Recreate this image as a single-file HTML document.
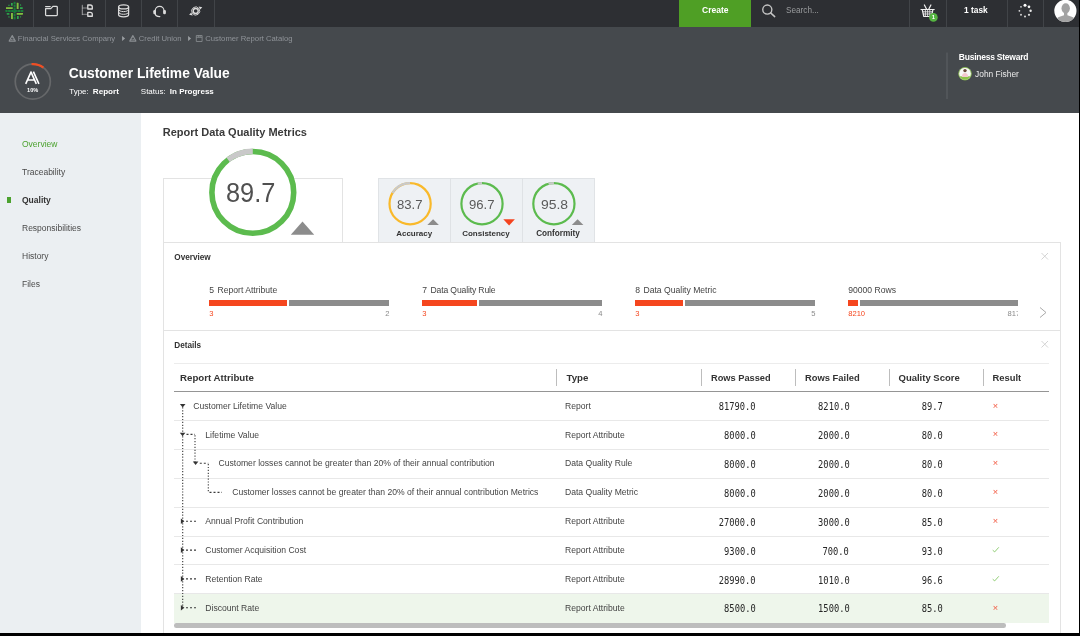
<!DOCTYPE html>
<html lang="en">
<head>
<meta charset="utf-8">
<title>Customer Lifetime Value</title>
<style>
*{box-sizing:border-box;margin:0;padding:0}
html,body{width:1080px;height:636px;overflow:hidden;background:#fff}
body{position:relative;font-family:"Liberation Sans",sans-serif;color:#444;font-size:8.5px}
.abs,.t{position:absolute}
.t{white-space:nowrap;line-height:1}
.b{font-weight:700}
#topbar{left:0;top:0;width:1080px;height:27px;background:#2d2f33}
.sep{position:absolute;top:0;width:1.200px;height:27px;background:#414448}
#header{left:0;top:27px;width:1080px;height:86px;background:#45494d}
#sidebar{left:0;top:113px;width:141px;height:523px;background:#ebeff2}
.nav{left:22px;font-size:8.5px;color:#4a4a4a}
.mono{font-family:"DejaVu Sans Mono","Liberation Mono",monospace;font-size:9.9px;color:#262626;transform-origin:100% 50%;transform:scaleX(.885)}
.panel{position:absolute;border:1px solid #e3e3e3;background:#fff}
.bar{position:absolute;height:5.500px;top:300.300px}
.red{background:#f04e23}
.gry{background:#8c8c8c}
.row{position:absolute;left:174px;width:875px;height:1px;background:#e8e8e8}
.hsep{position:absolute;top:369px;width:1px;height:17px;background:#bdbdbd}
.rt{font-size:8.6px;color:#444}
.num{text-align:right}
</style>
</head>
<body>
<div id="wrap" style="position:absolute;left:0;top:0;width:1080px;height:636px;will-change:transform">
<!-- TOP BAR -->
<div id="topbar" class="abs">
<div class="sep" style="left:32.7px"></div><div class="sep" style="left:69px"></div><div class="sep" style="left:105px"></div><div class="sep" style="left:141.3px"></div><div class="sep" style="left:177.3px"></div><div class="sep" style="left:213.5px"></div>
<div class="sep" style="left:909px"></div><div class="sep" style="left:945.5px"></div><div class="sep" style="left:1006.5px"></div><div class="sep" style="left:1043px"></div>
<div class="abs" style="left:679px;top:0;width:72px;height:27px;background:#4f9f25"></div>
<span class="t b" style="left:702px;top:6px;font-size:8.5px;color:#fff">Create</span>
<span class="t" style="left:786px;top:6.5px;font-size:8.2px;color:#9a9c9e">Search...</span>
<span class="t b" style="left:964px;top:6px;font-size:8.4px;color:#fff">1 task</span>
<span class="t b" style="left:931.700px;top:14.400px;font-size:6px;color:#fff;z-index:2">1</span>
<svg class="abs" style="left:0;top:0" width="1080" height="27" viewBox="0 0 1080 27">
<!-- logo -->
<g id="logo">
<clipPath id="lc"><circle cx="14.5" cy="10.8" r="9.2"/></clipPath>
<g clip-path="url(#lc)">
<path d="M5 10.900H24" stroke="#1a7d3a" stroke-width="2" stroke-dasharray="2.600 .5" fill="none"/>
<path d="M14.600 1.500V20.500" stroke="#1a7d3a" stroke-width="2" stroke-dasharray="2.600 .5" fill="none"/>
<rect x="6" y="7.200" width="6.700" height="1.800" fill="#82bf3f"/>
<rect x="16.700" y="13" width="6.300" height="1.800" fill="#82bf3f"/>
<rect x="16.700" y="2.700" width="1.900" height="6.300" fill="#82bf3f"/>
<rect x="11" y="13" width="1.900" height="6.300" fill="#82bf3f"/>
<rect x="11" y="3" width="1.700" height="2.700" fill="#2fa84f"/>
<rect x="17" y="16" width="1.700" height="3" fill="#2fa84f"/>
<rect x="6.700" y="13.100" width="2.700" height="1.600" fill="#2fa84f"/>
<rect x="20" y="7.200" width="2.700" height="1.800" fill="#2fa84f"/>
<rect x="8.300" y="4.700" width="1.300" height="1.300" fill="#2a9a48"/>
<rect x="20" y="4.300" width="1.200" height="1.400" fill="#2a9a48"/>
<rect x="8.300" y="16.300" width="1.300" height="1.300" fill="#2a9a48"/>
<rect x="20" y="16.300" width="1.200" height="1.300" fill="#2a9a48"/>
</g></g>
<g fill="none" stroke="#dcdcdc" stroke-width="1.25" stroke-linejoin="round" stroke-linecap="round">
<!-- folder -->
<path d="M45.6 6.5h4.6"/>
<path d="M45.6 8.7h5.2l2.1-2.3h3.6a.8.8 0 0 1 .8.8v7.6a.8.8 0 0 1-.8.8h-10.1a.8.8 0 0 1-.8-.8z"/>
<!-- hierarchy -->
<path d="M82.3 5.2v9.500" stroke-width="0.9" stroke-dasharray="0.8 0.5" opacity=".65"/>
<path d="M82.8 8h4.300M82.8 14.3h4.300" stroke-width="0.9" opacity=".6"/>
<path d="M87.800 5h2.4a2.100 2.100 0 0 1 2.100 2.100v1.900h-4.500zM87.800 12.3h2.4a2.100 2.100 0 0 1 2.100 2.100v1.900h-4.500z" stroke-width="1.350"/>
<!-- database -->
<ellipse cx="123.6" cy="6.9" rx="5" ry="2"/>
<path d="M118.6 6.9v7.9c0 1.1 2.2 2 5 2s5-.9 5-2v-7.9"/>
<path d="M118.6 9.6c0 1.1 2.2 2 5 2s5-.9 5-2M118.6 12.3c0 1.1 2.2 2 5 2s5-.9 5-2" stroke-width="1"/>
<!-- headset -->
<path d="M155.2 13.2v-2.3a4.4 4.4 0 0 1 8.8 0v2.3"/>
<path d="M155.2 13.5c0 2 1.6 3 4.6 3" />
<!-- transfer -->
<circle cx="195.7" cy="11" r="2.500" stroke-width="1.350"/>
<path d="M192.15 13.05A4.1 4.1 0 0 1 198.84 8.36M199.25 8.95A4.1 4.1 0 0 1 192.56 13.64" stroke-width=".9"/>
<!-- search -->
<circle cx="767.300" cy="9.600" r="4.550" stroke="#c4c4c4" stroke-width="1.400"/>
<path d="M770.600 12.900l4.100 3.700" stroke="#c4c4c4" stroke-width="1.500"/>
<!-- basket -->
<path d="M921 9.500h13.200M922.300 9.700l1.500 6.800h7.600l1.500-6.800M926.600 9.300l-2.200-4.300M928.700 9.300l2.200-4.300" stroke-width="1.200" stroke="#f0f0f0"/>
<path d="M925.400 10v6M927.600 10v6M929.800 10v6M922.800 11.800h9.600M923.300 14h8.600" stroke-width="0.800" stroke="#f0f0f0"/>
</g>
<g fill="#dcdcdc">
<rect x="153.300" y="10" width="2.600" height="4.200" rx="1.200"/>
<rect x="163.300" y="10" width="2.600" height="4.200" rx="1.200"/>
<path d="M202.300 7.300l-3.700-.9 1.600 3.200zM189.100 14.700l3.700.9-1.600-3.200z"/>
<!-- dotted spinner -->
<circle cx="1025" cy="5.200" r="1.500" fill="#fff"/>
<circle cx="1029" cy="6.800" r="1.350" fill="#f4f4f4"/>
<circle cx="1030.600" cy="10.800" r="1.200" fill="#eaeaea"/>
<circle cx="1029" cy="14.800" r="1.100"/>
<circle cx="1025" cy="16.400" r="1"/>
<circle cx="1021" cy="14.800" r=".95"/>
<circle cx="1019.400" cy="10.800" r=".9"/>
<circle cx="1021" cy="6.800" r=".85"/>
</g>
<circle cx="933.400" cy="17.400" r="4.300" fill="#55b441"/>

<!-- avatar -->
<clipPath id="ac"><circle cx="1065.400" cy="10.850" r="11.100"/></clipPath>
<circle cx="1065.400" cy="10.850" r="11.100" fill="#fdfdfd"/>
<g clip-path="url(#ac)" fill="#a2a2a2">
<ellipse cx="1065.700" cy="8.300" rx="4.200" ry="5.100"/>
<path d="M1064 12h3.400v3.200l5 1.800c1.500.6 2.500 2 2.500 4v3h-18.500v-3c0-2 1-3.400 2.500-4l5.100-1.800z"/>
</g>
</svg>
</div>
<div id="header" class="abs"></div>
<!-- breadcrumbs -->
<span class="t" style="left:17.8px;top:35.1px;font-size:7.7px;color:#8f9398">Financial Services Company</span>
<span class="t" style="left:138.8px;top:35.1px;font-size:7.7px;color:#8f9398">Credit Union</span>
<span class="t" style="left:205.3px;top:35.1px;font-size:7.7px;color:#8f9398">Customer Report Catalog</span>
<svg class="abs" style="left:0;top:27px" width="1080" height="86" viewBox="0 27 1080 86">
<g fill="none" stroke="#8b8f93" stroke-width="0.8" stroke-linejoin="round">
<path d="M12.25 35.600l3.100 5.500h-6.200z" stroke-width="1.100"/><path d="M12.25 37.200v.7M10.95 39.600h.7M12.85 39.600h.7" stroke-width=".9" stroke-linecap="round"/>
<path d="M132.85 35.600l3.100 5.500h-6.200z" stroke-width="1.100"/><path d="M132.85 37.200v.7M131.55 39.600h.7M133.45 39.600h.7" stroke-width=".9" stroke-linecap="round"/>
<path d="M196.300 35.500h5.800v6h-5.800zM196.300 37.300h5.800M198.300 35.500v1.800M200.100 35.500v1.800"/>
</g>
<path d="M122.100 35.900l3 2.500-3 2.500zM188.100 35.900l3 2.500-3 2.500z" fill="#9a9ea2"/>
<!-- progress ring -->
<circle cx="32.800" cy="81.600" r="17.550" fill="none" stroke="#66686a" stroke-width="1.700"/>
<path d="M31.58 64.09A17.55 17.55 0 0 1 43.36 67.58" fill="none" stroke="#f04e23" stroke-width="2.300"/>
<g fill="none" stroke="#fff" stroke-width="1.600">
<path d="M25.700 83.900l5.500-12.300M30.800 71.600l5.500 12.300M33.400 71.600l5.500 12.300M27.600 80h7"/>
</g>
<rect x="946.500" y="52.500" width="1" height="46.500" fill="#5e6266"/>
<!-- small avatar -->
<clipPath id="sc"><circle cx="965" cy="73.700" r="6"/></clipPath>
<circle cx="965" cy="73.700" r="6.300" fill="#f6f6f6" stroke="#8bc34a" stroke-width="0.800"/>
<g clip-path="url(#sc)">
<rect x="958" y="76.300" width="14" height="5" fill="#8bc34a"/>
<circle cx="965" cy="70.600" r="1.700" fill="#6b4a3a"/>
<path d="M961.800 77c0-2.600 1.400-4 3.200-4s3.200 1.400 3.200 4z" fill="#f3c9cf"/>
</g>
</svg>
<span class="t b" style="left:27.100px;top:87.600px;font-size:5.600px;color:#fff">10%</span>
<span class="t b" style="left:68.700px;top:67.400px;font-size:13.800px;color:#fff">Customer Lifetime Value</span>
<span class="t" style="left:69.200px;top:87.700px;font-size:8px;color:#fff">Type:</span>
<span class="t b" style="left:92.800px;top:87.700px;font-size:8.100px;color:#fff">Report</span>
<span class="t" style="left:140.800px;top:87.700px;font-size:8px;color:#fff">Status:</span>
<span class="t b" style="left:169.800px;top:87.700px;font-size:8px;color:#fff">In Progress</span>
<span class="t b" style="left:958.800px;top:52.500px;font-size:8.500px;letter-spacing:-.24px;color:#fff">Business Steward</span>
<span class="t" style="left:975.100px;top:69.500px;font-size:8.400px;color:#ececec">John Fisher</span>
<div id="sidebar" class="abs"></div>
<span class="t nav" style="top:139.500px;color:#4ca22f">Overview</span>
<span class="t nav" style="top:167.600px">Traceability</span>
<span class="t nav b" style="top:195.700px;color:#333">Quality</span>
<span class="t nav" style="top:223.800px">Responsibilities</span>
<span class="t nav" style="top:251.900px">History</span>
<span class="t nav" style="top:280px">Files</span>
<div class="abs" style="left:7px;top:196.500px;width:3.500px;height:6.500px;background:#4ca22f"></div>
<div id="main">
<span class="t b" style="left:162.700px;top:127px;font-size:11px;color:#3a3a3a">Report Data Quality Metrics</span>
<!-- big gauge card -->
<div class="panel" style="left:162.500px;top:177.500px;width:180.500px;height:65px"></div>
<!-- tabs -->
<div class="abs" style="left:377.500px;top:177.500px;width:217.500px;height:64.500px;background:#eef1f4;border:1px solid #e0e3e6;border-bottom:none"></div>
<div class="abs" style="left:449.500px;top:178px;width:1px;height:64px;background:#dfe2e5"></div>
<div class="abs" style="left:521.500px;top:178px;width:1px;height:64px;background:#dfe2e5"></div>
<!-- overview panel -->
<div class="panel" style="left:162.500px;top:241.500px;width:898.400px;height:89.500px"></div>
<!-- details panel -->
<div class="panel" style="left:162.500px;top:330px;width:898.400px;height:310px"></div>
<svg class="abs" style="left:141px;top:113px" width="939" height="523" viewBox="141 113 939 523">
<!-- big gauge -->
<circle cx="252.800" cy="192.400" r="40.900" fill="#fff" stroke="#5cbb4e" stroke-width="5.600"/>
<path d="M252.8 151.40A41 41 0 0 0 228.07 159.70" fill="none" stroke="#c9c9c9" stroke-width="5.600"/>
<path d="M290.800 234.800h23.400l-11.700-13.300z" fill="#8c8c8c"/>
<!-- small gauges -->
<circle cx="410.100" cy="203.700" r="20.600" fill="none" stroke="#f9b92a" stroke-width="2.200"/>
<path d="M410.1 183.10A20.6 20.6 0 0 0 392.50 193.00" fill="none" stroke="#c9c9c9" stroke-width="2.200"/>
<circle cx="482" cy="203.700" r="20.600" fill="none" stroke="#5cbb4e" stroke-width="2.200"/>
<path d="M482 183.10A20.6 20.6 0 0 0 477.75 183.54" fill="none" stroke="#c9c9c9" stroke-width="2.200"/>
<circle cx="553.900" cy="203.700" r="20.600" fill="none" stroke="#5cbb4e" stroke-width="2.200"/>
<path d="M553.9 183.10A20.6 20.6 0 0 0 548.53 183.81" fill="none" stroke="#c9c9c9" stroke-width="2.200"/>
<path d="M427.300 224.900h11.600l-5.800-5.700z" fill="#8c8c8c"/>
<path d="M571.800 224.900h11.600l-5.800-5.700z" fill="#8c8c8c"/>
<path d="M503.300 219.300h11.600l-5.800 6.300z" fill="#f4431f"/>
<!-- close / chevron -->
<g fill="none" stroke="#cfcfcf" stroke-width="0.900">
<path d="M1041.500 253l6.500 6.500M1048 253l-6.500 6.500M1041.500 341l6.500 6.500M1048 341l-6.500 6.500"/>
<path d="M1040 307.500l6 5-6 5" stroke="#a8a8a8" stroke-width="1"/>
</g>
</svg>
<span class="t" style="left:225.500px;top:179.200px;font-size:27.700px;color:#505050;transform-origin:0 0;transform:scaleX(.915)">89.7</span>
<span class="t" style="left:397.200px;top:198px;font-size:13.400px;color:#5a5a5a;transform-origin:0 0;transform:scaleX(.98)">83.7</span>
<span class="t" style="left:468.800px;top:198px;font-size:13.400px;color:#5a5a5a;transform-origin:0 0;transform:scaleX(.98)">96.7</span>
<span class="t" style="left:540.600px;top:198px;font-size:13.400px;color:#5a5a5a;transform-origin:0 0;transform:scaleX(1.04)">95.8</span>
<span class="t b" style="left:396.200px;top:230.100px;font-size:8px;color:#333">Accuracy</span>
<span class="t b" style="left:462.200px;top:230.100px;font-size:8px;color:#333">Consistency</span>
<span class="t b" style="left:536.200px;top:230.100px;font-size:8.200px;color:#333">Conformity</span>
<span class="t b" style="left:174.300px;top:254px;font-size:8.200px;color:#333">Overview</span>
<span class="t b" style="left:174.300px;top:341.800px;font-size:8.200px;color:#333">Details</span>
<span class="t" style="left:209.2px;top:286.3px;font-size:8.6px;color:#444">5</span>
<span class="t" style="left:217.5px;top:286.3px;font-size:8.6px;color:#444">Report Attribute</span>
<div class="bar" style="left:209.2px;width:77.5px;background:#f5461e"></div>
<div class="bar gry" style="left:288.9px;width:100.5px"></div>
<span class="t" style="left:209.2px;top:310.4px;font-size:7.6px;color:#f5461e">3</span>
<span class="t" style="right:690.6px;top:310.4px;font-size:7.6px;color:#8a8a8a">2</span>
<span class="t" style="left:422.2px;top:286.3px;font-size:8.6px;color:#444">7</span>
<span class="t" style="left:430.5px;top:286.3px;font-size:8.6px;color:#444;letter-spacing:-.14px">Data Quality Rule</span>
<div class="bar" style="left:422.2px;width:54.5px;background:#f5461e"></div>
<div class="bar gry" style="left:478.9px;width:123.5px"></div>
<span class="t" style="left:422.2px;top:310.4px;font-size:7.6px;color:#f5461e">3</span>
<span class="t" style="right:477.6px;top:310.4px;font-size:7.6px;color:#8a8a8a">4</span>
<span class="t" style="left:635.2px;top:286.3px;font-size:8.6px;color:#444">8</span>
<span class="t" style="left:643.5px;top:286.3px;font-size:8.6px;color:#444">Data Quality Metric</span>
<div class="bar" style="left:635.2px;width:47.5px;background:#f5461e"></div>
<div class="bar gry" style="left:684.9px;width:130.5px"></div>
<span class="t" style="left:635.2px;top:310.4px;font-size:7.6px;color:#f5461e">3</span>
<span class="t" style="right:264.6px;top:310.4px;font-size:7.6px;color:#8a8a8a">5</span>
<span class="t" style="left:848.2px;top:286.3px;font-size:8.6px;color:#444">90000 Rows</span>
<div class="bar" style="left:848.2px;width:10px;background:#f5461e"></div>
<div class="bar gry" style="left:860.4px;width:157.4px"></div>
<span class="t" style="left:848.2px;top:310.4px;font-size:7.6px;color:#f5461e">8210</span>
<div class="abs" style="left:1000px;top:309px;width:17.8px;height:10px;overflow:hidden"><span class="t" style="left:7.5px;top:1.4px;font-size:7.6px;color:#8a8a8a">8170</span></div>
<div class="row" style="top:363px;background:#ececec"></div>
<div class="abs" style="left:174px;top:390.9px;width:875px;height:1.5px;background:#959595"></div>
<div class="hsep" style="left:556.0px"></div>
<div class="hsep" style="left:701.2px"></div>
<div class="hsep" style="left:794.7px"></div>
<div class="hsep" style="left:888.5px"></div>
<div class="hsep" style="left:982.7px"></div>
<span class="t b" style="left:180px;top:373.1px;font-size:9.7px;color:#333">Report Attribute</span>
<span class="t b" style="left:566.5px;top:373.1px;font-size:9.7px;color:#333">Type</span>
<span class="t b" style="left:711px;top:373.5px;font-size:9.25px;color:#333">Rows Passed</span>
<span class="t b" style="left:805px;top:373.3px;font-size:9.4px;color:#333">Rows Failed</span>
<span class="t b" style="left:898.5px;top:373.3px;font-size:9.5px;color:#333">Quality Score</span>
<span class="t b" style="left:992.5px;top:373.3px;font-size:9.4px;color:#333">Result</span>
<span class="t rt" style="left:193.3px;top:401.7px">Customer Lifetime Value</span>
<span class="t rt" style="left:565px;top:401.7px">Report</span>
<span class="t mono" style="right:324.1px;top:402.4px">81790.0</span>
<span class="t mono" style="right:230.8px;top:402.4px">8210.0</span>
<span class="t mono" style="right:136.8px;top:402.4px">89.7</span>
<span class="t" style="left:992.8px;top:401.5px;font-size:9.2px;color:#f2553c">×</span>
<div class="row" style="top:420.1px"></div>
<span class="t rt" style="left:205.3px;top:430.6px">Lifetime Value</span>
<span class="t rt" style="left:565px;top:430.6px">Report Attribute</span>
<span class="t mono" style="right:324.1px;top:431.2px">8000.0</span>
<span class="t mono" style="right:230.8px;top:431.2px">2000.0</span>
<span class="t mono" style="right:136.8px;top:431.2px">80.0</span>
<span class="t" style="left:992.8px;top:430.4px;font-size:9.2px;color:#f2553c">×</span>
<div class="row" style="top:448.9px"></div>
<span class="t rt" style="left:218.5px;top:459.4px">Customer losses cannot be greater than 20% of their annual contribution</span>
<span class="t rt" style="left:565px;top:459.4px">Data Quality Rule</span>
<span class="t mono" style="right:324.1px;top:460.1px">8000.0</span>
<span class="t mono" style="right:230.8px;top:460.1px">2000.0</span>
<span class="t mono" style="right:136.8px;top:460.1px">80.0</span>
<span class="t" style="left:992.8px;top:459.2px;font-size:9.2px;color:#f2553c">×</span>
<div class="row" style="top:477.8px"></div>
<span class="t rt" style="left:232.2px;top:488.3px">Customer losses cannot be greater than 20% of their annual contribution Metrics</span>
<span class="t rt" style="left:565px;top:488.3px">Data Quality Metric</span>
<span class="t mono" style="right:324.1px;top:488.9px">8000.0</span>
<span class="t mono" style="right:230.8px;top:488.9px">2000.0</span>
<span class="t mono" style="right:136.8px;top:488.9px">80.0</span>
<span class="t" style="left:992.8px;top:488.1px;font-size:9.2px;color:#f2553c">×</span>
<div class="row" style="top:506.6px"></div>
<span class="t rt" style="left:205.3px;top:517.1px">Annual Profit Contribution</span>
<span class="t rt" style="left:565px;top:517.1px">Report Attribute</span>
<span class="t mono" style="right:324.1px;top:517.8px">27000.0</span>
<span class="t mono" style="right:230.8px;top:517.8px">3000.0</span>
<span class="t mono" style="right:136.8px;top:517.8px">85.0</span>
<span class="t" style="left:992.8px;top:516.9px;font-size:9.2px;color:#f2553c">×</span>
<div class="row" style="top:535.5px"></div>
<span class="t rt" style="left:205.3px;top:546.0px">Customer Acquisition Cost</span>
<span class="t rt" style="left:565px;top:546.0px">Report Attribute</span>
<span class="t mono" style="right:324.1px;top:546.6px">9300.0</span>
<span class="t mono" style="right:230.8px;top:546.6px">700.0</span>
<span class="t mono" style="right:136.8px;top:546.6px">93.0</span>
<svg class="abs" style="left:990px;top:545.35px" width="12" height="10" viewBox="0 0 12 10"><path d="M2.700 5.200l2 1.700 4.100-4.600" fill="none" stroke="#84c765" stroke-width=".9"/></svg>
<div class="row" style="top:564.3px"></div>
<span class="t rt" style="left:205.3px;top:574.8px">Retention Rate</span>
<span class="t rt" style="left:565px;top:574.8px">Report Attribute</span>
<span class="t mono" style="right:324.1px;top:575.5px">28990.0</span>
<span class="t mono" style="right:230.8px;top:575.5px">1010.0</span>
<span class="t mono" style="right:136.8px;top:575.5px">96.6</span>
<svg class="abs" style="left:990px;top:574.20px" width="12" height="10" viewBox="0 0 12 10"><path d="M2.700 5.200l2 1.700 4.100-4.600" fill="none" stroke="#84c765" stroke-width=".9"/></svg>
<div class="abs" style="left:174px;top:594.2px;width:875px;height:28.4px;background:#eef6eb"></div>
<div class="row" style="top:593.2px"></div>
<span class="t rt" style="left:205.3px;top:603.7px">Discount Rate</span>
<span class="t rt" style="left:565px;top:603.7px">Report Attribute</span>
<span class="t mono" style="right:324.1px;top:604.3px">8500.0</span>
<span class="t mono" style="right:230.8px;top:604.3px">1500.0</span>
<span class="t mono" style="right:136.8px;top:604.3px">85.0</span>
<span class="t" style="left:992.8px;top:603.5px;font-size:9.2px;color:#f2553c">×</span>
<div class="abs" style="left:174px;top:623px;width:832px;height:4.6px;border-radius:2.3px;background:#bdbdbd"></div>
<svg class="abs" style="left:170px;top:395px" width="70" height="230" viewBox="170 395 70 230">
<g fill="none" stroke="#3a3a3a" stroke-width="1.100" stroke-dasharray="1.2 1.700">
<path d="M182.7 407.3V607.8"/>
<path d="M195 435.2V462.5"/>
<path d="M208.3 464.0V492.4"/>
</g>
<g fill="none" stroke="#3a3a3a" stroke-width="1.100" stroke-dasharray="2 2">
<path d="M186.5 434.4H195"/>
<path d="M199.8 463.2H208.3"/>
<path d="M209.5 492.4H222"/>
<path d="M186 521.2H196.5"/>
<path d="M186 550.1H196.5"/>
<path d="M186 578.9H196.5"/>
<path d="M186 607.8H196.5"/>
</g>
<g fill="#333">
<path d="M179.9 404.0h5.600l-2.800 3.400z"/>
<path d="M179.8 432.8h5.600l-2.800 3.400z"/>
<path d="M192.8 461.6h5.600l-2.800 3.400z"/>
<path d="M180.9 518.4v5.600l3.500-2.800z"/>
<path d="M180.9 547.3v5.600l3.500-2.800z"/>
<path d="M180.9 576.1v5.600l3.500-2.800z"/>
<path d="M180.9 605.0v5.600l3.500-2.800z"/>
</g></svg>
</div>
<!-- frame -->
<div class="abs" style="left:0;top:632.800px;width:1080px;height:3.200px;background:#000"></div>
<div class="abs" style="left:1078.600px;top:0;width:1.400px;height:636px;background:#000"></div>
</div>
</body>
</html>
